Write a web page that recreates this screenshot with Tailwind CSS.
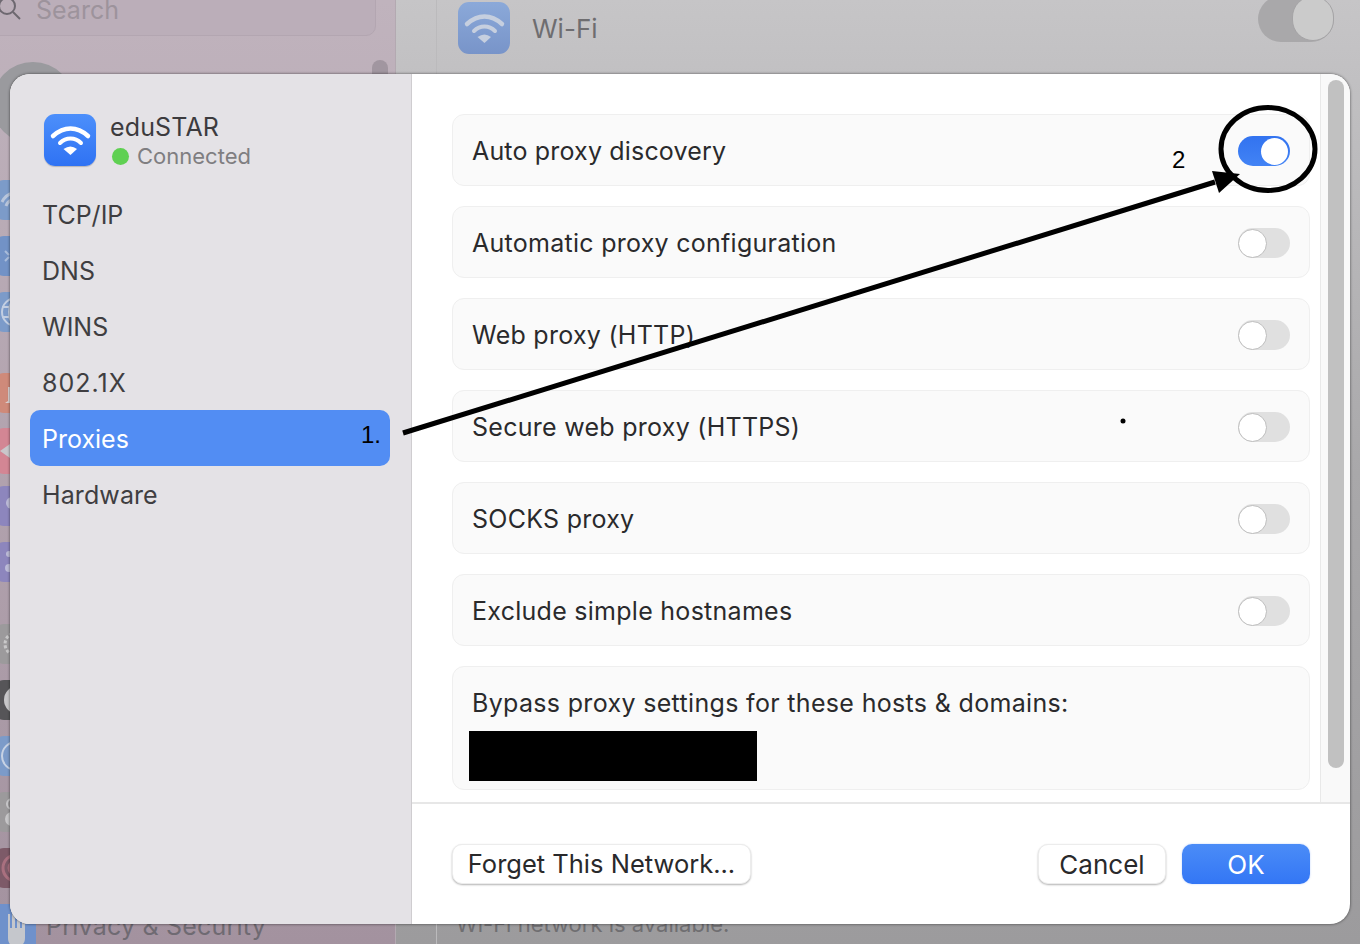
<!doctype html>
<html><head><meta charset="utf-8"><script src="https://cdn.jsdelivr.net/npm/@tailwindcss/browser@4"></script></head>
<body class="m-0">
<div class="relative w-[1360px] h-[944px] overflow-hidden flex font-['Inter',sans-serif] bg-[#a9a7a9]">
  <!-- Background: system settings sidebar -->
  <div class="w-[396px] h-full bg-gradient-to-b from-[#c0b3bd] to-[#a3929f] relative shrink-0 border-r border-[#b3a9b1]">
    <div class="absolute left-[-20px] top-[-20px] w-[396px] h-[56px] rounded-[10px] bg-[#bbaeb9] border border-[#b3a6b1]"></div>
    <svg class="absolute left-[-7px] top-[-7px]" width="32" height="32" viewBox="0 0 32 32" fill="none" stroke="#6d6870" stroke-width="2"><circle cx="14" cy="13" r="8"/><path d="M20 19l7 7"/></svg>
    <div class="absolute left-[36px] top-[-8px] text-[25px] text-[#9d939c]">Search</div>
    <div class="absolute left-[-8px] top-[62px] w-[82px] h-[82px] rounded-full bg-[#9a9a9e]"></div>
    <div class="absolute left-[372px] top-[60px] w-[16px] h-[30px] rounded-full bg-[#a196a0]"></div>
    <div class="absolute left-[-8px] top-[180px] w-[40px] h-[40px] rounded-[12px] bg-[#7c9bc9] overflow-hidden"><svg width="40" height="40" fill="none" stroke="#b9c6dc" stroke-width="3"><path d="M10 22c3-6 6-8 11-9"/><path d="M14 26c1-3 3-5 6-6"/></svg></div>
    <div class="absolute left-[-8px] top-[236px] w-[40px] h-[40px] rounded-[12px] bg-[#7292c6] overflow-hidden"><svg width="40" height="40" fill="none" stroke="#a9bcdb" stroke-width="2"><path d="M13 15l4 4M13 25l4-4"/></svg></div>
    <div class="absolute left-[-8px] top-[292px] w-[40px] h-[40px] rounded-[12px] bg-[#7c9bc9] overflow-hidden"><svg width="40" height="40" fill="none" stroke="#c3cfe2" stroke-width="2"><circle cx="24" cy="20" r="14"/><ellipse cx="24" cy="20" rx="7" ry="14"/><path d="M10 15h28M10 25h28"/></svg></div>
    <div class="absolute left-[-8px] top-[373px] w-[40px] h-[40px] rounded-[12px] bg-[#cf8a7a] overflow-hidden"><svg width="40" height="40" fill="#ddd3d3"><path d="M13 30l3-2V14h10v16z"/></svg></div>
    <div class="absolute left-[-8px] top-[428px] w-[40px] h-[46px] rounded-[12px] bg-[#d38694] overflow-hidden"><svg width="40" height="46" fill="#c9c7cb"><path d="M8 23l10-7v14z"/></svg></div>
    <div class="absolute left-[-8px] top-[486px] w-[40px] h-[40px] rounded-[12px] bg-[#8d86bd] overflow-hidden"><svg width="40" height="40" fill="#bdbcd8"><circle cx="20" cy="17" r="6"/></svg></div>
    <div class="absolute left-[-8px] top-[542px] w-[40px] h-[40px] rounded-[12px] bg-[#8d86bd] overflow-hidden"><svg width="40" height="40" fill="#bdbcd8"><circle cx="17" cy="12" r="3"/><circle cx="17" cy="26" r="4"/></svg></div>
    <div class="absolute left-[-8px] top-[624px] w-[40px] h-[40px] rounded-[12px] bg-[#9c9a9c] overflow-hidden"><svg width="40" height="40" fill="none" stroke="#c9c8c9" stroke-width="3" stroke-dasharray="3 2"><circle cx="24" cy="20" r="11"/></svg></div>
    <div class="absolute left-[-8px] top-[680px] w-[40px] h-[40px] rounded-[12px] bg-[#565558] overflow-hidden"><svg width="40" height="40" fill="#c8c7c9"><circle cx="26" cy="20" r="14"/></svg></div>
    <div class="absolute left-[-8px] top-[736px] w-[40px] h-[40px] rounded-[12px] bg-[#7c9bc9] overflow-hidden"><svg width="40" height="40" fill="none" stroke="#c7d2e4" stroke-width="2"><circle cx="24" cy="20" r="14"/></svg></div>
    <div class="absolute left-[-8px] top-[792px] w-[40px] h-[40px] rounded-[12px] bg-[#9c9a9c] overflow-hidden"><svg width="40" height="40" fill="none" stroke="#c8c7c9" stroke-width="2"><circle cx="20" cy="12" r="5"/><circle cx="20" cy="27" r="6" fill="#c8c7c9"/></svg></div>
    <div class="absolute left-[-8px] top-[848px] w-[40px] h-[40px] rounded-[12px] bg-[#7d5a68] overflow-hidden"><svg width="40" height="40" fill="none" stroke="#a9707f" stroke-width="3"><circle cx="24" cy="20" r="7"/><circle cx="24" cy="20" r="13"/></svg></div>
    <div class="absolute left-[-16px] top-[904px] w-[52px] h-[52px] rounded-[10px] bg-[#6f91cb] overflow-hidden"><svg width="52" height="52" fill="#c5c7cc"><path d="M24 34V10h2v14h2V5h3v19h2V7h3v17h2V12h3v22c0 6-4 9-9 9s-8-4-8-9z"/></svg></div>
    <div class="absolute left-[46px] top-[910px] text-[25px] tracking-[0.22px] leading-[32px] text-[#6f6a72]">Privacy &amp; Security</div>
  </div>
  <!-- Background: Wi-Fi pane -->
  <div class="flex-1 h-full relative bg-gradient-to-b from-[#c6c5c7] via-[#a9a8aa] to-[#9c9b9d]">
    <div class="absolute left-[40px] top-[-20px] w-[960px] h-[1000px] border-l border-[#bbbabc]"></div>
    <div class="absolute left-[62px] top-[2px] w-[52px] h-[52px] rounded-[11px] bg-gradient-to-b from-[#8ba9d9] to-[#7894c9]">
      <svg width="52" height="52" viewBox="0 0 52 52" fill="none" stroke="#c6cfdf" stroke-width="4.5" stroke-linecap="round"><path d="M9 22C20 12 33 12 44 22"/><path d="M16 29C22 23 31 23 37 29" stroke-width="4"/><path d="M26.5 41L19.5 35Q26.5 30 33 35Z" fill="#c6cfdf" stroke="none"/></svg>
    </div>
    <div class="absolute left-[136px] top-[13px] text-[26px] leading-[32px] text-[#6e6d70]">Wi-Fi</div>
    <div class="absolute left-[862px] top-[-4px] w-[76px] h-[46px] rounded-full bg-[#a9a8aa]"><div class="absolute right-0 top-0 w-[42px] h-[45px] rounded-full bg-[#cbcbcb] border border-[#a5a4a6]"></div></div>
    <div class="absolute left-[60px] top-[910px] text-[22px] leading-[28px] text-[#6f6e71]">Wi-Fi network is available.</div>
  </div>

  <!-- Dialog -->
  <div class="absolute left-[10px] top-[74px] w-[1340px] h-[850px] rounded-[20px] overflow-hidden flex bg-white shadow-[0_0_3px_rgba(0,0,0,0.6)]">
    <aside class="w-[402px] shrink-0 bg-[#e4e2e6] border-r border-[#cfcdd0] pl-[20px] pr-[21px] pt-[40px]">
      <div class="flex items-start pl-[14px] gap-[14px] h-[68px]">
        <div class="w-[52px] h-[52px] rounded-[11px] bg-gradient-to-b from-[#4c8ffb] to-[#2f72f3] shadow-[0_1px_1px_rgba(0,0,0,0.2)]">
          <svg width="52" height="52" viewBox="0 0 52 52" fill="none" stroke="#fff" stroke-width="4.5" stroke-linecap="round"><path d="M9 22C20 12 33 12 44 22"/><path d="M16 29C22 23 31 23 37 29" stroke-width="4"/><path d="M26.5 41L19.5 35Q26.5 30 33 35Z" fill="#fff" stroke="none"/></svg>
        </div>
        <div class="flex flex-col">
          <div class="text-[25px] tracking-[0.15px] leading-[28px] text-[#3c3b3e] -mt-[1px]">eduSTAR</div>
          <div class="flex items-center gap-[8px] mt-[1px] ml-[2px] text-[22px] leading-[28px] text-[#7f7e81]"><span class="w-[17px] h-[17px] rounded-full bg-[#5fd052]"></span>Connected</div>
        </div>
      </div>
      <nav class="mt-[4px] flex flex-col text-[25px] text-[#3f3e41]">
        <div class="h-[56px] pl-[12px] pt-[4px] flex items-center">TCP/IP</div>
        <div class="h-[56px] pl-[12px] pt-[4px] flex items-center">DNS</div>
        <div class="h-[56px] pl-[12px] pt-[4px] flex items-center">WINS</div>
        <div class="h-[56px] pl-[12px] pt-[4px] flex items-center tracking-[1px]">802.1X</div>
        <div class="h-[56px] pl-[12px] pr-[9px] pt-[4px] flex items-center justify-between rounded-[10px] bg-[#528df3] text-white"><span>Proxies</span><span class="font-['Liberation_Sans',sans-serif] text-[24px] text-black -translate-y-[5px]">1.</span></div>
        <div class="h-[56px] pl-[12px] pt-[4px] flex items-center tracking-[0.1px]">Hardware</div>
      </nav>
    </aside>
    <main class="flex-1 flex flex-col min-w-0">
      <div class="flex h-[730px] border-b-2 border-[#e7e7e7]">
        <div class="flex-1 pl-[40px] pr-[10px] pt-[40px] flex flex-col gap-[20px] text-[25px] tracking-[0.27px] text-[#2a2a2c]">
          <div class="h-[72px] rounded-[12px] border border-[#efefef] bg-[#fafafa] pl-[19px] pr-[19px] pt-[2px] flex items-center justify-between"><span class="translate-y-[1px] tracking-[0.17px]">Auto proxy discovery</span><span class="relative w-[52px] h-[30px] rounded-full bg-gradient-to-b from-[#3273f0] to-[#4283f5]"><span class="absolute right-[2px] top-[1.5px] w-[27px] h-[27px] rounded-full bg-white"></span></span></div>
          <div class="h-[72px] rounded-[12px] border border-[#efefef] bg-[#fafafa] pl-[19px] pr-[19px] pt-[2px] flex items-center justify-between"><span class="translate-y-[1px]">Automatic proxy configuration</span><span class="relative w-[52px] h-[30px] rounded-full bg-[#e0e0e0]"><span class="absolute left-0 top-[0.5px] w-[29px] h-[29px] rounded-full bg-white border border-[#bdbdbd]"></span></span></div>
          <div class="h-[72px] rounded-[12px] border border-[#efefef] bg-[#fafafa] pl-[19px] pr-[19px] pt-[2px] flex items-center justify-between"><span class="translate-y-[1px]">Web proxy (HTTP)</span><span class="relative w-[52px] h-[30px] rounded-full bg-[#e0e0e0]"><span class="absolute left-0 top-[0.5px] w-[29px] h-[29px] rounded-full bg-white border border-[#bdbdbd]"></span></span></div>
          <div class="h-[72px] rounded-[12px] border border-[#efefef] bg-[#fafafa] pl-[19px] pr-[19px] pt-[2px] flex items-center justify-between"><span class="translate-y-[1px]">Secure web proxy (HTTPS)</span><span class="relative w-[52px] h-[30px] rounded-full bg-[#e0e0e0]"><span class="absolute left-0 top-[0.5px] w-[29px] h-[29px] rounded-full bg-white border border-[#bdbdbd]"></span></span></div>
          <div class="h-[72px] rounded-[12px] border border-[#efefef] bg-[#fafafa] pl-[19px] pr-[19px] pt-[2px] flex items-center justify-between"><span class="translate-y-[1px]">SOCKS proxy</span><span class="relative w-[52px] h-[30px] rounded-full bg-[#e0e0e0]"><span class="absolute left-0 top-[0.5px] w-[29px] h-[29px] rounded-full bg-white border border-[#bdbdbd]"></span></span></div>
          <div class="h-[72px] rounded-[12px] border border-[#efefef] bg-[#fafafa] pl-[19px] pr-[19px] pt-[2px] flex items-center justify-between"><span class="translate-y-[1px]">Exclude simple hostnames</span><span class="relative w-[52px] h-[30px] rounded-full bg-[#e0e0e0]"><span class="absolute left-0 top-[0.5px] w-[29px] h-[29px] rounded-full bg-white border border-[#bdbdbd]"></span></span></div>
          <div class="h-[124px] rounded-[12px] border border-[#efefef] bg-[#fafafa] pl-[19px] pr-[19px] pt-[20px] leading-[32px] tracking-[0.33px]">Bypass proxy settings for these hosts &amp; domains:<div class="-ml-[3px] mt-[12px] w-[288px] h-[50px] bg-black"></div></div>
        </div>
        <div class="w-[30px] shrink-0 bg-[#f9f9f9] border-l border-[#e9e9e9] pt-[6px] pl-[7px]"><div class="w-[16px] h-[688px] rounded-full bg-[#c1c1c1]"></div></div>
      </div>
      <div class="flex-1 flex items-center justify-between pl-[40px] pr-[40px] text-[26px]">
        <button class="h-[40px] w-[299px] rounded-[10px] bg-white border border-[#ececec] shadow-[0_1px_2px_rgba(0,0,0,0.3)] text-[25.5px] text-[#29292b]">Forget This Network...</button>
        <div class="flex gap-[16px]">
          <button class="h-[40px] w-[128px] rounded-[10px] bg-white border border-[#ececec] shadow-[0_1px_2px_rgba(0,0,0,0.3)] text-[#29292b]">Cancel</button>
          <button class="h-[40px] w-[128px] rounded-[10px] bg-gradient-to-b from-[#4b8cf7] to-[#3376f5] text-white shadow-[0_0_2px_rgba(50,110,240,0.35)]">OK</button>
        </div>
      </div>
    </main>
  </div>

  <!-- Annotations -->
  <svg class="absolute inset-0 pointer-events-none" width="1360" height="944" viewBox="0 0 1360 944" fill="none">
    <path d="M403 433L1215 182" stroke="#000" stroke-width="5"/>
    <path d="M1240 174L1212 171L1219 193Z" fill="#000"/>
    <ellipse cx="1268" cy="149" rx="47" ry="41.5" stroke="#000" stroke-width="5"/>
    <circle cx="1123" cy="421" r="2.5" fill="#000"/>
  </svg>
  <div class="absolute left-[1172px] top-[146px] font-['Liberation_Sans',sans-serif] text-[24px] leading-[28px] text-black">2</div>
</div>
</body></html>
